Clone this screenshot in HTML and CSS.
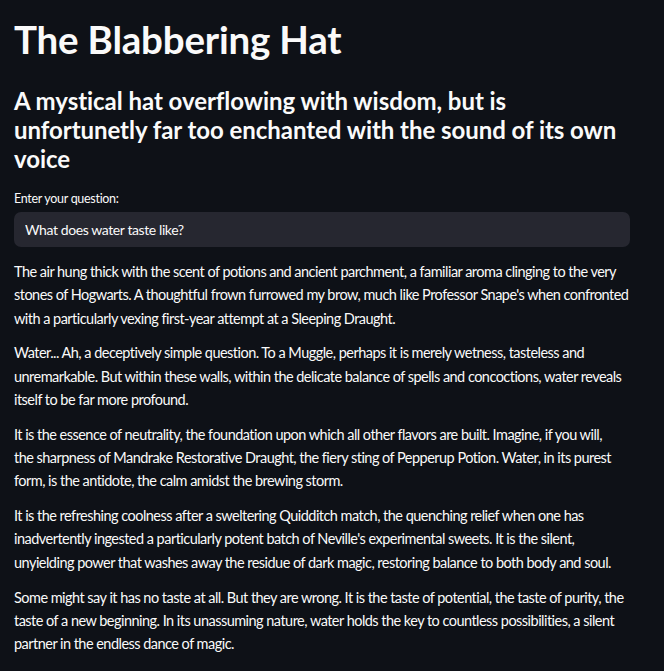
FILE: index.html
```html
<!DOCTYPE html>
<html lang="en">
<head>
<meta charset="utf-8">
<title>The Blabbering Hat</title>
<link rel="stylesheet" href="styles.css">
</head>
<body>
<main class="app">
  <h1 class="title">The Blabbering Hat</h1>
  <h3 class="subtitle">A mystical hat overflowing with wisdom, but is unfortunetly far too enchanted with the sound of its own voice</h3>
  <div class="field">
    <label class="field-label" for="q">Enter your question:</label>
    <div class="input-wrap"><input id="q" class="input" type="text" value="What does water taste like?"></div>
  </div>
  <div class="answer">
    <p>The air hung thick with the scent of potions and ancient parchment, a familiar aroma clinging to the very stones of Hogwarts. A thoughtful frown furrowed my brow, much like Professor Snape's when confronted with a particularly vexing first-year attempt at a Sleeping Draught.</p>
    <p>Water... Ah, a deceptively simple question. To a Muggle, perhaps it is merely wetness, tasteless and unremarkable. But within these walls, within the delicate balance of spells and concoctions, water reveals itself to be far more profound.</p>
    <p>It is the essence of neutrality, the foundation upon which all other flavors are built. Imagine, if you will, the&nbsp;sharpness of Mandrake Restorative Draught, the fiery sting of Pepperup Potion. Water, in its purest form, is the antidote, the calm amidst the brewing storm.</p>
    <p>It is the refreshing coolness after a sweltering Quidditch match, the quenching relief when one has inadvertently ingested a particularly potent batch of Neville's experimental sweets. It is the silent, unyielding power that washes away the residue of dark magic, restoring balance to both body and soul.</p>
    <p>Some might say it has no taste at all. But they are wrong. It is the taste of potential, the taste of purity, the taste of a new beginning. In its unassuming nature, water holds the key to countless possibilities, a silent partner in the endless dance of magic.</p>
  </div>
</main>
</body>
</html>
```
FILE: styles.css
```css
html, body {
  margin: 0;
  padding: 0;
  background: #0e1117;
  color: #fafafa;
  font-family: Lato, "Noto Sans", sans-serif;
}
.app {
  width: 616px;
  padding: 14px 0 0 14px;
}
.title {
  margin: 0;
  font-size: 38.5px;
  font-weight: 700;
  line-height: 50px;
  letter-spacing: -0.2px;
}
.subtitle {
  margin: 22px 0 0;
  font-size: 24px;
  font-weight: 700;
  line-height: 29px;
  letter-spacing: -0.05px;
}
.field {
  margin-top: 18px;
  display: flex;
  flex-direction: column;
}
.field-label {
  font-size: 12.5px;
  line-height: 16px;
  height: 21px;
  letter-spacing: -0.3px;
}
.input-wrap {
  background: #262730;
  border-radius: 7px;
  height: 35px;
  display: flex;
  align-items: center;
}
.input {
  background: transparent;
  border: 0;
  outline: none;
  color: #fafafa;
  font-family: inherit;
  font-size: 14px;
  letter-spacing: -0.4px;
  padding: 0 11px;
  width: 100%;
}
.answer {
  margin-top: 13px;
  font-size: 14.5px;
  line-height: 23.3px;
  letter-spacing: -0.53px;
}
.answer p {
  margin: 0 0 11.5px;
}
```
